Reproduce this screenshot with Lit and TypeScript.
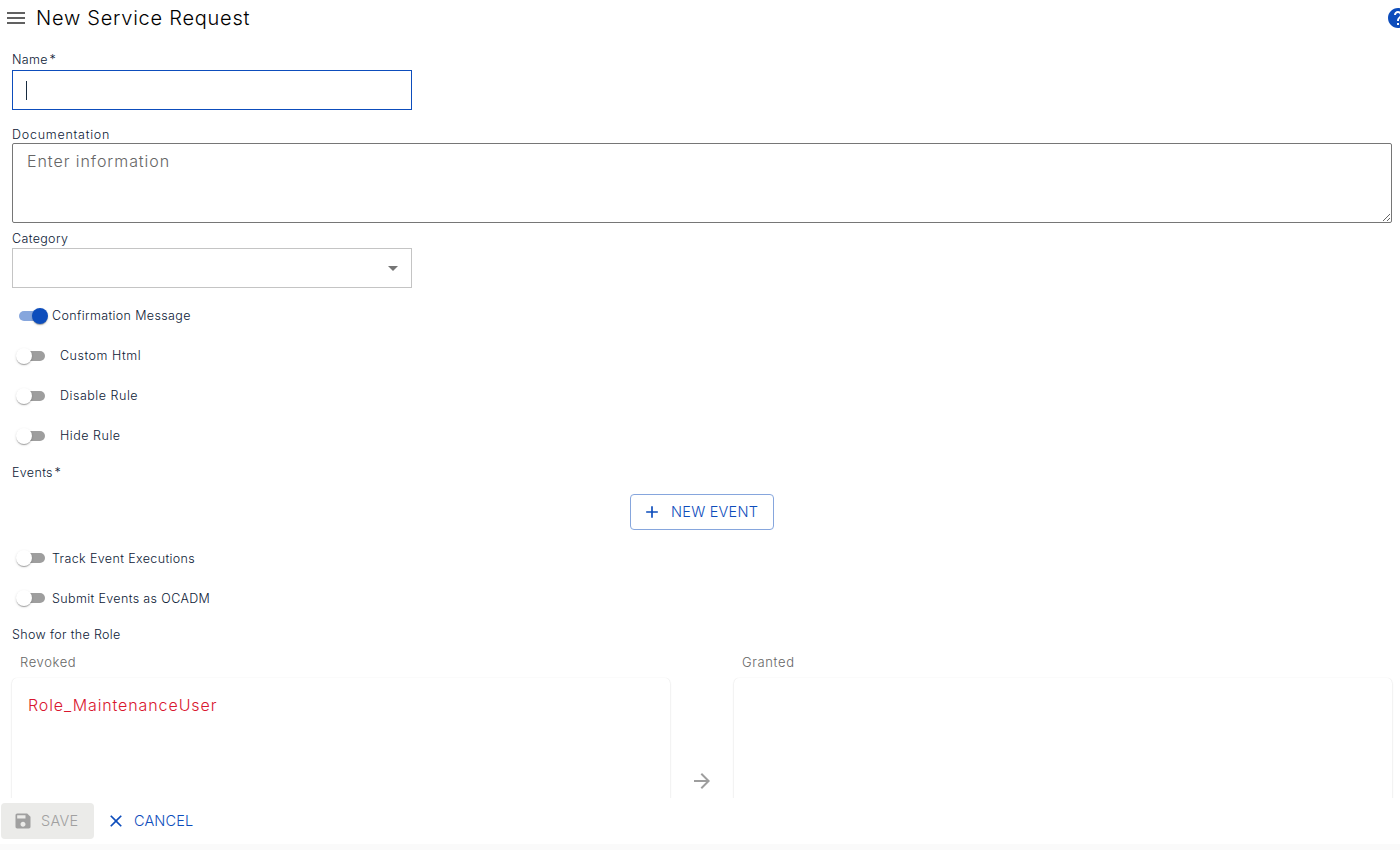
import { LitElement, html, css, svg } from "lit";
import { customElement, property } from "lit/decorators.js";

const icons = {
  menu: svg`<path d="M3 18h18v-2H3v2zm0-5h18v-2H3v2zm0-7v2h18V6H3z"/>`,
  help: svg`<path d="M12 2C6.48 2 2 6.48 2 12s4.48 10 10 10 10-4.48 10-10S17.52 2 12 2zm1 17h-2v-2h2v2zm2.07-7.75l-.9.92C13.45 12.9 13 13.5 13 15h-2v-.5c0-1.1.45-2.1 1.17-2.83l1.24-1.26c.37-.36.59-.86.59-1.41 0-1.1-.9-2-2-2s-2 .9-2 2H8c0-2.21 1.79-4 4-4s4 1.79 4 4c0 .88-.36 1.68-.93 2.25z"/>`,
  drop: svg`<path d="M7 10l5 5 5-5z"/>`,
  add: svg`<path d="M19 13h-6v6h-2v-6H5v-2h6V5h2v6h6v2z"/>`,
  save: svg`<path d="M17 3H5c-1.11 0-2 .9-2 2v14c0 1.1.89 2 2 2h14c1.1 0 2-.9 2-2V7l-4-4zm-5 16c-1.66 0-3-1.34-3-3s1.34-3 3-3 3 1.34 3 3-1.34 3-3 3zm3-10H5V5h10v4z"/>`,
  close: svg`<path d="M19 6.41L17.59 5 12 10.59 6.41 5 5 6.41 10.59 12 5 17.59 6.41 19 12 13.41 17.59 19 19 17.59 13.41 12z"/>`,
  arrow: svg`<path d="M12 4l-1.41 1.41L16.17 11H4v2h12.17l-5.58 5.59L12 20l8-8z"/>`,
};

const icon = (name: keyof typeof icons, cls = "") =>
  html`<svg class="icon ${cls}" viewBox="0 0 24 24" aria-hidden="true">${icons[name]}</svg>`;

@customElement("toggle-row")
class ToggleRow extends LitElement {
  @property() label = "";
  @property({ type: Boolean }) on = false;
  @property({ type: Boolean }) inset = false;
  @property({ type: Boolean }) low = false;

  static styles = css`
    :host { display: flex; flex: none; align-items: center; height: 40px; }
    .switch { box-sizing: border-box; width: 40px; height: 24px; padding: 7px; display: grid; grid-template-rows: 10px; align-items: center; }
    .track { grid-area: 1 / 1; width: 26px; height: 10px; border-radius: 5px; background: #9e9e9e; }
    .thumb {
      grid-area: 1 / 1; width: 16px; height: 16px; margin-left: -3px; border-radius: 50%; background: #fff;
      box-shadow: 0 2px 1px -1px rgba(0, 0, 0, .2), 0 1px 1px rgba(0, 0, 0, .14), 0 1px 3px rgba(0, 0, 0, .12);
      z-index: 1;
    }
    .on .track { background: #86a6dd; }
    .on .thumb { background: #0d4dbc; margin-left: 13px; }
    .text { font-size: 12.5px; line-height: 16px; letter-spacing: .37px; color: #0c2036; white-space: nowrap; }
    .inset { margin-left: 8px; letter-spacing: .52px; }
    .low { padding-top: 2px; }
  `;

  render() {
    return html`
      <span class="switch ${this.on ? "on" : ""}"><span class="track"></span><span class="thumb"></span></span>
      <span class="text ${this.inset ? "inset" : ""} ${this.low ? "low" : ""}">${this.label}</span>
    `;
  }
}

@customElement("app-root")
class AppRoot extends LitElement {
  static styles = css`
    :host { display: block; font-family: Inter, "Open Sans", sans-serif; font-weight: 300; color: #0c2036; }
    .app { height: 850px; width: 100%; display: flex; flex-direction: column; overflow: hidden; background: #fff; }
    .icon { width: 24px; height: 24px; fill: currentColor; flex: none; display: block; }
    .sm { width: 20px; height: 20px; }
    header { height: 36px; flex: none; display: flex; align-items: center; padding-left: 4px; overflow: hidden; }
    .menu { color: #616161; }
    h1 { margin: 0 auto 0 8px; font-size: 20px; font-weight: 300; line-height: 28px; letter-spacing: .75px; color: #000; white-space: nowrap; }
    .help { color: #0d4dbc; margin-right: -10px; }
    main { flex: 1; min-height: 0; overflow: hidden; padding: 16px 7px 0 12px; display: flex; flex-direction: column; }
    .label { flex: none; font-size: 12.5px; line-height: 16px; height: 16px; letter-spacing: .35px; white-space: nowrap; }
    .doc { letter-spacing: .75px; }
    .star { margin-left: 1.5px; }
    .input, .select { flex: none; box-sizing: border-box; width: 400px; height: 40px; display: flex; align-items: center; }
    .input { border: 1px solid #0d4dbc; margin: 2px 0 17px; padding-left: 13px; }
    .caret { width: 1px; height: 19px; background: #172b40; }
    textarea {
      flex: none; box-sizing: border-box; width: 1380px; height: 80px; margin: 0 0 8px; padding: 6px 14px; display: block;
      border: 1px solid #767676; border-radius: 2px; font: 300 16px/22px Inter, sans-serif; letter-spacing: .95px; background: #fff;
    }
    textarea::placeholder { color: #666; opacity: 1; }
    .select { border: 1px solid #c4c4c4; margin: 1px 0 8px; justify-content: flex-end; padding-right: 6px; color: #757575; }
    .events { margin-top: 9px; }
    .button {
      box-sizing: border-box; height: 36px; display: flex; align-items: center; gap: 9px; flex: none;
      font-size: 14.5px; line-height: 24px; letter-spacing: .25px; color: #0d4dbc; border-radius: 4px; white-space: nowrap;
    }
    .outlined { width: 144px; border: 1px solid #86a6dd; padding-left: 11px; margin: 13px 0 8px 618px; }
    .show { margin-top: 9px; }
    .transfer { flex: none; display: grid; grid-template-columns: 658px 64px 658px; margin-top: 10px; height: 300px; }
    .side { display: flex; flex-direction: column; }
    .caption { font-size: 13px; line-height: 18px; height: 25px; letter-spacing: .62px; padding-left: 8px; color: #666; }
    .panel {
      flex: 1; border-radius: 5px; padding: 16px; font-size: 16px; line-height: 22px; letter-spacing: .9px; color: #d9162f;
      box-shadow: 0 0 1px rgba(0, 0, 0, .1), 0 1px 2px rgba(0, 0, 0, .16);
    }
    .move { color: #9e9e9e; padding: 116px 0 0 20px; }
    footer { flex: none; height: 46px; display: flex; align-items: center; padding-left: 1px; gap: 12px; background: #fff; }
    .save { width: 93px; padding-left: 12px; gap: 8px; background: #ebebe9; color: #a0a0a0; }
    .cancel { gap: 8px; letter-spacing: .12px; }
    .strip { flex: none; height: 6px; background: #fafafa; }
  `;

  render() {
    return html`
      <div class="app">
        <header>${icon("menu", "menu")}<h1>New Service Request</h1>${icon("help", "help")}</header>
        <main>
          <div class="label">Name<span class="star">*</span></div>
          <div class="input"><span class="caret"></span></div>
          <div class="label doc">Documentation</div>
          <textarea placeholder="Enter information"></textarea>
          <div class="label">Category</div>
          <div class="select">${icon("drop")}</div>
          <toggle-row label="Confirmation Message" on></toggle-row>
          <toggle-row label="Custom Html" inset></toggle-row>
          <toggle-row label="Disable Rule" inset></toggle-row>
          <toggle-row label="Hide Rule" inset></toggle-row>
          <div class="label events">Events<span class="star">*</span></div>
          <div class="button outlined">${icon("add", "sm")}<span>NEW EVENT</span></div>
          <toggle-row label="Track Event Executions" low></toggle-row>
          <toggle-row label="Submit Events as OCADM" low></toggle-row>
          <div class="label show">Show for the Role</div>
          <div class="transfer">
            <div class="side"><div class="caption">Revoked</div><div class="panel">Role_MaintenanceUser</div></div>
            <div class="move">${icon("arrow")}</div>
            <div class="side"><div class="caption">Granted</div><div class="panel"></div></div>
          </div>
        </main>
        <footer>
          <div class="button save">${icon("save", "sm")}<span>SAVE</span></div>
          <div class="button cancel">${icon("close", "sm")}<span>CANCEL</span></div>
        </footer>
        <div class="strip"></div>
      </div>
    `;
  }
}
